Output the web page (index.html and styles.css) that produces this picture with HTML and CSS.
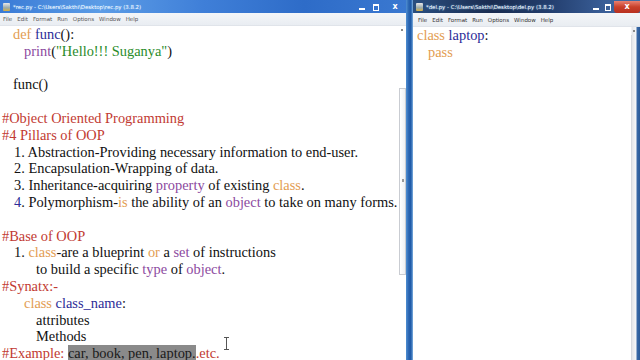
FILE: index.html
```html
<!DOCTYPE html>
<html>
<head>
<meta charset="utf-8">
<link rel="stylesheet" href="styles.css">
</head>
<body>
<div class="screen">
  <section class="win win-left">
    <div class="titlebar tb-left">
      <span class="ticon"></span>
      <span class="ttext">*rec.py - C:\Users\Sakthi\Desktop\rec.py (3.8.2)</span>
      <span class="tctrl">
        <span class="c-min"></span><span class="c-max"></span><span class="c-close">x</span>
      </span>
    </div>
    <div class="menubar">
      <span>File</span><span>Edit</span><span>Format</span><span>Run</span><span>Options</span><span>Window</span><span>Help</span>
    </div>
    <div class="body">
      <div class="editor">
        <div class="ln i1"><span class="kw">def</span> <span class="dn">func</span>():</div>
        <div class="ln i2"><span class="bi">print</span>(<span class="st">"Hello!!! Suganya"</span>)</div>
        <div class="ln">&nbsp;</div>
        <div class="ln i1">func()</div>
        <div class="ln">&nbsp;</div>
        <div class="ln cm">#Object Oriented Programming</div>
        <div class="ln cm">#4 Pillars of OOP</div>
        <div class="ln i1b">1. Abstraction-Providing necessary information to end-user.</div>
        <div class="ln i1b">2. Encapsulation-Wrapping of data.</div>
        <div class="ln i1b">3. Inheritance-acquiring <span class="bi">property</span> of existing <span class="kw">class</span>.</div>
        <div class="ln i1b"><span class="dn">4</span>. Polymorphism-<span class="kw">is</span> the ability of an <span class="bi">object</span> to take on many forms.</div>
        <div class="ln">&nbsp;</div>
        <div class="ln cm">#Base of OOP</div>
        <div class="ln i1b">1. <span class="kw">class</span>-are a blueprint <span class="kw">or</span> a <span class="bi">set</span> of instructions</div>
        <div class="ln i3">to build a specific <span class="bi">type</span> of <span class="bi">object</span>.</div>
        <div class="ln cm">#Synatx:-</div>
        <div class="ln i2"><span class="kw">class</span> <span class="dn">class_name</span>:</div>
        <div class="ln i3">attributes</div>
        <div class="ln i3">Methods</div>
        <div class="ln cm">#Example: <span class="sel">car, book, pen, laptop.</span>.etc.</div>
        <svg class="ibeam" width="7" height="13" viewBox="0 0 7 13"><path d="M1 0.5h5M1 12.5h5M3.5 0.5v12" stroke="#555" stroke-width="1" fill="none"/></svg>
      </div>
      <div class="vscroll vs-left">
        <span class="arrow"></span>
        <div class="thumb"><span class="grip"></span></div>
      </div>
    </div>
  </section>
  <div class="divider"></div>
  <section class="win win-right">
    <div class="titlebar tb-right">
      <span class="ticon"></span>
      <span class="ttext">*del.py - C:\Users\Sakthi\Desktop\del.py (3.8.2)</span>
      <span class="tctrl">
        <span class="c-min"></span><span class="c-max"></span><span class="c-close red">x</span>
      </span>
    </div>
    <div class="menubar mb-right">
      <span>File</span><span>Edit</span><span>Format</span><span>Run</span><span>Options</span><span>Window</span><span>Help</span>
    </div>
    <div class="body">
      <div class="editor ed-right">
        <div class="ln"><span class="kw">class</span> <span class="dn">laptop</span>:</div>
        <div class="ln i1r"><span class="kw">pass</span></div>
      </div>
      <div class="vscroll vs-right">
        <span class="arrow"></span>
        <div class="track"></div>
      </div>
    </div>
  </section>
</div>
</body>
</html>
```
FILE: styles.css
```css
html, body {
  margin: 0;
  padding: 0;
  background: #fff;
}
.screen {
  width: 640px;
  height: 360px;
  overflow: hidden;
  display: flex;
}
.win {
  display: flex;
  flex-direction: column;
  background: #fff;
  height: 360px;
}
.win-left { width: 406px; }
.win-right { flex: 1; }
.divider {
  width: 7px;
  background: linear-gradient(to right, #4f8fd2, #2a64b0 40%, #1d5aa8 70%, #7fb0e0);
}
.titlebar {
  height: 13px;
  display: flex;
  align-items: center;
  font-family: "DejaVu Sans", sans-serif;
  font-size: 5.4px;
  color: #fff;
  position: relative;
}
.tb-left {
  background: linear-gradient(to right, #3a7bd6, #5c9ce6 25%, #3f7fd8 50%, #2e6cc8 75%, #3a78d0);
}
.tb-right {
  background: linear-gradient(to right, #2a4f80, #1a2c50 35%, #233e6e 60%, #3a5f98 85%, #4070a8);
}
.ticon {
  width: 7px;
  height: 8px;
  margin-left: 3px;
  background: linear-gradient(#e8e8e8, #9aa 60%, #d9b040);
  border-radius: 1px;
}
.ttext {
  margin-left: 3px;
  text-shadow: 0 0 2px #7fc0ff;
  white-space: nowrap;
}
.tctrl {
  margin-left: auto;
  display: flex;
  align-items: center;
  height: 13px;
}
.c-min, .c-max {
  width: 12px;
  height: 10px;
  position: relative;
}
.c-min::after {
  content: "";
  position: absolute;
  left: 3px; top: 6px;
  width: 6px; height: 2px;
  background: #fff;
}
.c-max::after {
  content: "";
  position: absolute;
  left: 3px; top: 2px;
  width: 4px; height: 4px;
  border: 1px solid #fff;
  border-top-width: 2px;
}
.c-close {
  width: 22px;
  height: 12px;
  text-align: center;
  line-height: 11px;
  font-size: 8px;
  font-weight: bold;
  color: #fff;
}
.tb-left .tctrl { margin-right: 0; }
.tb-left .c-min, .tb-left .c-max { width: 14px; }
.c-close.red {
  width: 26px;
  background: linear-gradient(#e88070, #c8402a 50%, #b83020);
  border-radius: 0 0 3px 3px;
}
.menubar {
  height: 12px;
  background: linear-gradient(#f4f6f8, #e9edf2);
  border-bottom: 1px solid #e0e4ea;
  display: flex;
  align-items: center;
  font-family: "DejaVu Sans", sans-serif;
  font-size: 5.5px;
  color: #555;
  padding-left: 3px;
}
.menubar span { margin-right: 5px; }
.mb-right { height: 13px; padding-left: 5px; color: #333; }
.body {
  flex: 1;
  display: flex;
  min-height: 0;
}
.editor {
  flex: 1;
  position: relative;
  font-family: "Liberation Serif", serif;
  font-size: 14.4px;
  line-height: 16.8px;
  color: #111;
  overflow: hidden;
}
.ed-right { padding-left: 4px; padding-top: 0; }
.ln { height: 16.8px; white-space: pre; }
.i1 { padding-left: 13px; }
.i1b { padding-left: 14px; }
.i2 { padding-left: 24px; }
.i3 { padding-left: 36px; }
.i1r { padding-left: 11px; }
.cm { padding-left: 2px; color: #c23a32; }
.kw { color: #e39d52; }
.bi { color: #8c4aa0; }
.dn { color: #2c2c98; }
.st { color: #2a8c2a; }
.sel { background: #8a8a8a; color: #1a1a1a; }
.ibeam {
  position: absolute;
  left: 223px;
  top: 311px;
}
.vscroll {
  width: 8px;
  position: relative;
  background: #fff;
}
.arrow {
  position: absolute;
  left: 3px; top: 3px;
  width: 2px; height: 2px;
  background: #888;
}
.vs-left .thumb {
  position: absolute;
  left: 1px; top: 62px;
  width: 5px;
  height: 185px;
  border: 1px solid #c9ccd2;
  background: linear-gradient(to right, #fff, #eef0f3);
}
.grip {
  position: absolute;
  left: 2px; top: 90px;
  width: 2px; height: 3px;
  background: #999;
}
.vs-right {
  width: 10px;
  background: linear-gradient(to right, #fff, #fff 1px, #e4e6ea 2px, #f6f7f8 6px, #3a6aa8 7px, #2a5a98);
}
.vs-right .track {
  position: absolute;
  left: 1px; top: 8px;
  width: 5px; bottom: 0;
  border-left: 1px solid #d8dbe0;
}
```
